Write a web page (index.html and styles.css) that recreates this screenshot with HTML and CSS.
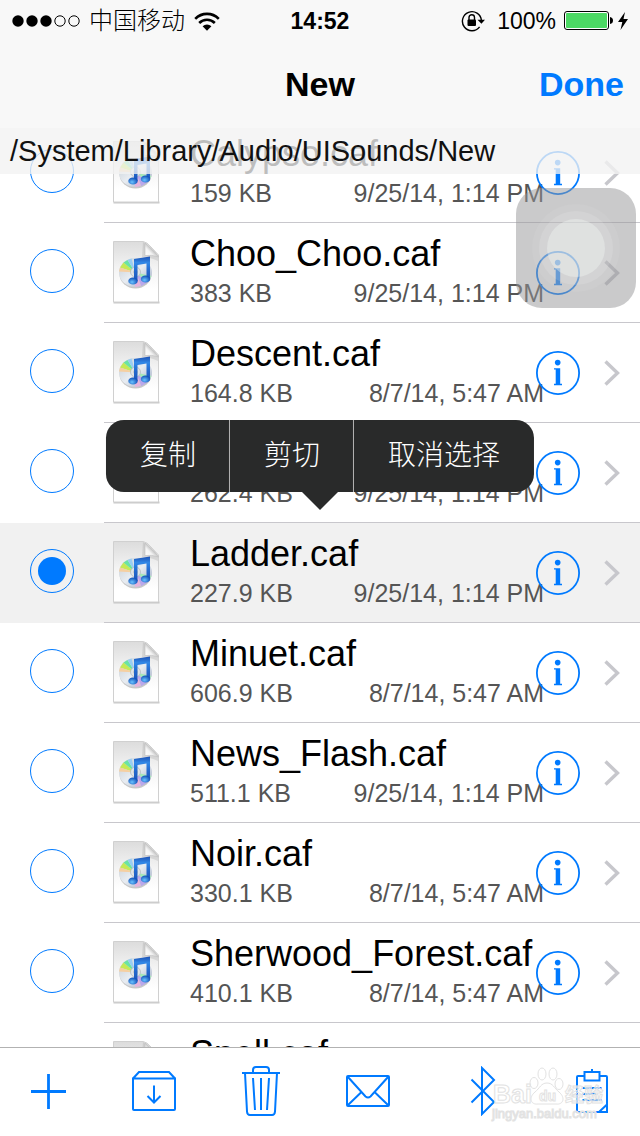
FILE: index.html
```
<!DOCTYPE html>
<html lang="zh-CN">
<head>
<meta charset="utf-8">
<meta name="viewport" content="width=device-width">
<title>New</title>
<link rel="stylesheet" href="styles.css">
</head>
<body>
<svg class="defs" aria-hidden="true">
  <defs>
    <linearGradient id="paper" x1="0" y1="0" x2="0" y2="1">
      <stop offset="0" stop-color="#dcdcdc"/><stop offset=".45" stop-color="#f4f4f4"/><stop offset=".8" stop-color="#fff"/>
    </linearGradient>
    <linearGradient id="fold" x1="0" y1="1" x2="1" y2="0">
      <stop offset="0" stop-color="#fff"/><stop offset=".35" stop-color="#f4f4f4"/><stop offset=".6" stop-color="#b4b4b4"/>
    </linearGradient>
    <linearGradient id="disc" x1="0" y1="0" x2="1" y2="1">
      <stop offset="0" stop-color="#c3ccd3"/><stop offset=".5" stop-color="#e9edf2"/><stop offset="1" stop-color="#9aa8c2"/>
    </linearGradient>
    <linearGradient id="note" x1="0" y1="0" x2="0" y2="1">
      <stop offset="0" stop-color="#1c50b4"/><stop offset=".25" stop-color="#3187e6"/><stop offset=".6" stop-color="#2467cc"/><stop offset="1" stop-color="#1a55bb"/>
    </linearGradient>
    <radialGradient id="head" cx=".4" cy=".65" r=".6">
      <stop offset="0" stop-color="#69c3ff"/><stop offset="1" stop-color="#1352bb"/>
    </radialGradient>
    <symbol id="file" viewBox="0 0 48 64">
      <path d="M.5 61.500h46" stroke="#b5b5b5" stroke-width="2" opacity=".7"/>
      <path d="M.5.5H30Q34 1 38 6L45.500 14v47H.5z" fill="url(#paper)" stroke="#d0d0d0"/>
      <path d="M30 1L29 16q8 0 16 4v-5z" fill="#999" opacity=".25"/>
      <path d="M32 2v12.500q7-1 13.500 1.500C42 10 37 7 32 2z" fill="url(#fold)" stroke="#bdbdbd" stroke-width=".6"/>
      <ellipse cx="22.500" cy="33" rx="16" ry="14.500" fill="#777" opacity=".4"/>
      <ellipse cx="22.500" cy="31.500" rx="16.500" ry="14.500" fill="url(#disc)"/>
      <path d="M22.500 31.500L7 26.500l3.500-5z" fill="#c4e955"/>
      <path d="M22.500 31.500L10.500 21.500l4-2.500z" fill="#6ae3a2"/>
      <path d="M22.500 31.500L7 26.500l-1 4z" fill="#f6cfa0"/>
      <path d="M22.500 31.500L14.500 19l4-1.500z" fill="#98cdf2"/>
      <path d="M22.500 31.500L38.500 35l-4 6z" fill="#a3e8b6"/>
      <path d="M22.500 31.500L34.500 41l-6 4z" fill="#bba7ea"/>
      <path d="M22.500 31.500L28 45l-6 1z" fill="#e7b4dc"/>
      <circle cx="22.500" cy="31" r="5" fill="#dfe3e7" stroke="#adb4bb" stroke-width=".7"/>
      <circle cx="22.500" cy="31" r="2" fill="#fff" stroke="#aaa" stroke-width=".6"/>
      <path d="M21 18L37 15.500V37.500H33.500V22.500L24.500 24V40H21z" fill="url(#note)"/>
      <ellipse cx="20" cy="40" rx="4.700" ry="3.600" fill="url(#head)"/>
      <ellipse cx="32.500" cy="38" rx="4.700" ry="3.600" fill="url(#head)"/>
    </symbol>
    <symbol id="info" viewBox="0 0 44 44">
      <circle cx="22" cy="22" r="21.100" fill="none" stroke="#007aff" stroke-width="1.800"/>
      <circle cx="21.700" cy="11.600" r="2.800" fill="#007aff"/>
      <path d="M18 17.300h6.200v15.500H26v1.400h-8v-1.400h1.700V18.600H18z" fill="#007aff"/>
    </symbol>
    <symbol id="chevron" viewBox="0 0 16 26">
      <path d="M1.500 1.500L13.500 13 1.500 24.500" fill="none" stroke="#c7c7cc" stroke-width="3.400"/>
    </symbol>
  </defs>
</svg>

<div class="app">
  <header class="header">
    <div class="status">
      <div class="status-left">
        <svg class="signal" viewBox="0 0 68 12" role="img" aria-label="信号">
          <circle cx="6" cy="6" r="5.700"/><circle cx="20" cy="6" r="5.700"/><circle cx="34" cy="6" r="5.700"/>
          <g fill="none" stroke="#000"><circle cx="48" cy="6" r="5.200"/><circle cx="62" cy="6" r="5.200"/></g>
        </svg>
        <span class="carrier">中国移动</span>
        <svg class="wifi" viewBox="0 0 26 19" role="img" aria-label="Wi-Fi">
          <g fill="none" stroke="#000" stroke-width="2.600"><path d="M1.200 6.800a16.700 16.700 0 0 1 23.600 0"/><path d="M5.200 11a11 11 0 0 1 15.600 0"/></g>
          <path d="M8.600 14.300a6.200 6.200 0 0 1 8.800 0L13 18.700z"/>
        </svg>
      </div>
      <time class="clock">14:52</time>
      <div class="status-right">
        <svg class="lock" viewBox="0 0 24 22" role="img" aria-label="方向锁定">
          <path d="M18.600 16.800A9.500 9.500 0 1 1 20.400 10.500" fill="none" stroke="#000" stroke-width="1.400"/>
          <path d="M16.500 9.800h7.500l-3.600 4z"/><rect x="6.500" y="9.500" width="8.500" height="6.500" rx="1"/>
          <path d="M8 10V7.500a2.750 2.750 0 0 1 5.500 0V10" fill="none" stroke="#000" stroke-width="1.400"/>
        </svg>
        <span>100%</span>
        <svg class="battery" viewBox="0 0 50 20" aria-hidden="true">
          <rect x=".5" y=".5" width="44" height="18" rx="2.500" fill="#fff" stroke="#000"/><rect x="2" y="2" width="41" height="15" rx="1" fill="#4cd964"/>
          <path d="M46 6q3 .5 3 3.500T46 13z"/>
        </svg>
        <svg class="bolt" viewBox="0 0 10 18" aria-hidden="true"><path d="M7 0L0 10h4.300L2.500 18 10 7H5.500z"/></svg>
      </div>
    </div>
    <nav class="nav">
      <h1>New</h1>
      <button class="done" type="button">Done</button>
    </nav>
  </header>

  <main class="files">
    <p class="path">/System/Library/Audio/UISounds/New</p>
    <ul class="list">
      <li class="row">
        <input class="pick" type="checkbox" aria-label="Calypso.caf">
        <div class="entry"><svg class="file"><use href="#file"/></svg>
          <div class="text"><h2>Calypso.caf</h2><p class="meta"><span>159 KB</span><time>9/25/14, 1:14 PM</time></p></div>
          <button class="info" type="button" aria-label="Info"><svg><use href="#info"/></svg></button><svg class="chevron"><use href="#chevron"/></svg></div>
      </li>
      <li class="row">
        <input class="pick" type="checkbox" aria-label="Choo_Choo.caf">
        <div class="entry"><svg class="file"><use href="#file"/></svg>
          <div class="text"><h2>Choo_Choo.caf</h2><p class="meta"><span>383 KB</span><time>9/25/14, 1:14 PM</time></p></div>
          <button class="info" type="button" aria-label="Info"><svg><use href="#info"/></svg></button><svg class="chevron"><use href="#chevron"/></svg></div>
      </li>
      <li class="row">
        <input class="pick" type="checkbox" aria-label="Descent.caf">
        <div class="entry"><svg class="file"><use href="#file"/></svg>
          <div class="text"><h2>Descent.caf</h2><p class="meta"><span>164.8 KB</span><time>8/7/14, 5:47 AM</time></p></div>
          <button class="info" type="button" aria-label="Info"><svg><use href="#info"/></svg></button><svg class="chevron"><use href="#chevron"/></svg></div>
      </li>
      <li class="row">
        <input class="pick" type="checkbox" aria-label="262.4 KB">
        <div class="entry"><svg class="file"><use href="#file"/></svg>
          <div class="text"><h2></h2><p class="meta"><span>262.4 KB</span><time>9/25/14, 1:14 PM</time></p></div>
          <button class="info" type="button" aria-label="Info"><svg><use href="#info"/></svg></button><svg class="chevron"><use href="#chevron"/></svg></div>
      </li>
      <li class="row selected">
        <input class="pick" type="checkbox" aria-label="Ladder.caf" checked>
        <div class="entry"><svg class="file"><use href="#file"/></svg>
          <div class="text"><h2>Ladder.caf</h2><p class="meta"><span>227.9 KB</span><time>9/25/14, 1:14 PM</time></p></div>
          <button class="info" type="button" aria-label="Info"><svg><use href="#info"/></svg></button><svg class="chevron"><use href="#chevron"/></svg></div>
        <div class="menu"><button type="button">复制</button><button type="button">剪切</button><button type="button">取消选择</button></div>
      </li>
      <li class="row">
        <input class="pick" type="checkbox" aria-label="Minuet.caf">
        <div class="entry"><svg class="file"><use href="#file"/></svg>
          <div class="text"><h2>Minuet.caf</h2><p class="meta"><span>606.9 KB</span><time>8/7/14, 5:47 AM</time></p></div>
          <button class="info" type="button" aria-label="Info"><svg><use href="#info"/></svg></button><svg class="chevron"><use href="#chevron"/></svg></div>
      </li>
      <li class="row">
        <input class="pick" type="checkbox" aria-label="News_Flash.caf">
        <div class="entry"><svg class="file"><use href="#file"/></svg>
          <div class="text"><h2>News_Flash.caf</h2><p class="meta"><span>511.1 KB</span><time>9/25/14, 1:14 PM</time></p></div>
          <button class="info" type="button" aria-label="Info"><svg><use href="#info"/></svg></button><svg class="chevron"><use href="#chevron"/></svg></div>
      </li>
      <li class="row">
        <input class="pick" type="checkbox" aria-label="Noir.caf">
        <div class="entry"><svg class="file"><use href="#file"/></svg>
          <div class="text"><h2>Noir.caf</h2><p class="meta"><span>330.1 KB</span><time>8/7/14, 5:47 AM</time></p></div>
          <button class="info" type="button" aria-label="Info"><svg><use href="#info"/></svg></button><svg class="chevron"><use href="#chevron"/></svg></div>
      </li>
      <li class="row">
        <input class="pick" type="checkbox" aria-label="Sherwood_Forest.caf">
        <div class="entry"><svg class="file"><use href="#file"/></svg>
          <div class="text"><h2>Sherwood_Forest.caf</h2><p class="meta"><span>410.1 KB</span><time>8/7/14, 5:47 AM</time></p></div>
          <button class="info" type="button" aria-label="Info"><svg><use href="#info"/></svg></button><svg class="chevron"><use href="#chevron"/></svg></div>
      </li>
      <li class="row">
        <input class="pick" type="checkbox" aria-label="Spell.caf">
        <div class="entry"><svg class="file"><use href="#file"/></svg>
          <div class="text"><h2>Spell.caf</h2></div></div>
      </li>
    </ul>
    <div class="touch"><svg viewBox="0 0 120 120" aria-hidden="true"><g fill="#fff"><circle cx="60" cy="60" r="44" opacity=".06"/><circle cx="60" cy="60" r="37" opacity=".12"/><circle cx="60" cy="60" r="29" fill="#f1f6f4" opacity=".38"/></g></svg></div>
  </main>

  <footer class="toolbar">
    <button type="button" aria-label="添加"><svg width="35" height="35" viewBox="0 0 35 35"><path d="M17.500 0v35M0 17.500h35" stroke-width="2.800"/></svg></button>
    <button type="button" aria-label="归档"><svg width="44" height="40" viewBox="0 0 44 40"><path d="M1 7.500h42V38q0 1-1 1H2q-1 0-1-1zL7 1h30l6 6.500M22 14.500v16.500M15.500 25L22 31.500 28.500 25"/></svg></button>
    <button type="button" aria-label="删除"><svg width="38" height="50" viewBox="0 0 38 50"><path d="M0 7h38M11 7V4q0-3 3-3h10q3 0 3 3v3M3 7l2 38.500Q5.200 49 8 49h22q2.800 0 3-3.500L35 7M11 12l2 32M19 12v32M27 12l-2 32"/></svg></button>
    <button type="button" aria-label="邮件"><svg width="44" height="32" viewBox="0 0 44 32"><rect x="1" y="1" width="42" height="30" rx="1"/><path d="M1.500 1.500l18 20q2.500 2 5 0l18-20M1.500 30.500l14-13.500M42.500 30.500L28.500 17"/></svg></button>
    <button type="button" aria-label="蓝牙"><svg width="54" height="50" viewBox="0 0 54 50"><path d="M15.500 13.500L38 36 26 48V2L38 14 15.500 36.500"/></svg></button>
    <button type="button" aria-label="剪贴板"><svg width="32" height="44" viewBox="0 0 32 44"><path d="M8.500 7H2Q1 7 1 8v34q0 1 1 1h21l8-7.500V8q0-1-1-1h-6.500M8.500 3h15v8.500h-15zM16 0v3M6.500 19h19M6.500 25h13M6.500 31h19M31 35.500V43h-8"/></svg></button>
    <svg class="mark" viewBox="0 0 120 60" aria-hidden="true">
      <g fill="#fff" fill-opacity=".6" stroke="#e2e2e2" stroke-width="1">
        <ellipse cx="44" cy="18" rx="4" ry="5.500"/><ellipse cx="52" cy="9" rx="4" ry="6"/><ellipse cx="63" cy="9" rx="4" ry="6"/><ellipse cx="69" cy="19" rx="4" ry="5.500"/>
        <path d="M57 18c-6 0-7 5-12 9-7 6-4 13 3 12h18c7 1 10-6 3-12-5-4-6-9-12-9z"/>
        <text x="3" y="38" font-size="25" class="mark-bold">Bai</text><text x="49" y="36" font-size="14" class="mark-bold">du</text>
        <text x="75" y="37" font-size="19" class="mark-bold">经验</text><text x="2" y="53" font-size="13">jingyan.baidu.com</text>
      </g>
    </svg>
  </footer>
</div>
</body>
</html>
```
FILE: styles.css
```
* { box-sizing: border-box; }
body {
  margin: 0;
  background: #fff;
  color: #000;
  font-family: "Liberation Sans", "Noto Sans CJK SC", sans-serif;
}
h1, h2, p, ul { margin: 0; padding: 0; }
button { margin: 0; padding: 0; border: 0; background: none; font: inherit; }
svg { display: block; flex: none; }
.defs { position: absolute; width: 0; height: 0; }
.app { display: flex; flex-direction: column; height: 100vh; overflow: hidden; }

/* Status bar and navigation */
.header { position: relative; z-index: 3; background: #f8f8f8; }
.status {
  display: grid;
  grid-template-columns: 1fr auto 1fr;
  align-items: center;
  height: 40px;
  padding: 2px 12px 0;
  font-size: 23px;
}
.status-left, .status-right { display: flex; align-items: center; }
.status-right { justify-content: flex-end; }
.signal { width: 68px; height: 12px; }
.carrier { margin: 0 9px; font-size: 24px; font-weight: 300; line-height: 32px; }
.wifi { width: 26px; height: 19px; }
.clock { font-weight: 700; }
.lock { width: 24px; height: 22px; margin-right: 12px; }
.battery { width: 50px; height: 20px; margin: 0 4px 0 8px; }
.bolt { width: 10px; height: 18px; }
.nav {
  display: grid;
  grid-template-columns: 1fr auto 1fr;
  align-items: center;
  height: 88px;
  padding: 0 16px;
  font-size: 34px;
  font-weight: 700;
}
.nav h1 { grid-column: 2; font-size: inherit; }
.done { justify-self: end; color: #007aff; }

/* File list */
.files { position: relative; flex: 1; min-height: 0; overflow: hidden; }
.path {
  position: absolute;
  z-index: 1;
  top: 0;
  right: 0;
  left: 0;
  padding: 0 10px;
  background: rgba(242, 242, 242, .78);
  color: #111;
  font-size: 29px;
  line-height: 46px;
}
.list { margin-top: -5px; list-style: none; }
.row { position: relative; display: flex; height: 100px; white-space: nowrap; }
.selected { background: #f1f1f1; }
.pick {
  appearance: none;
  flex: none;
  width: 44px;
  height: 44px;
  margin: 26px 30px;
  padding: 7px;
  border: 1px solid #007aff;
  border-radius: 50%;
}
.pick:checked { background: #007aff content-box; }
.entry {
  display: flex;
  flex: 1;
  min-width: 0;
  padding: 0 20px 0 9px;
  border-bottom: 1px solid #c8c7cc;
}
.file { width: 48px; height: 64px; margin: 18px 29px 0 0; }
.text { flex: 1; min-width: 0; margin-right: -8px; padding-top: 9px; }
.text h2 { height: 44px; font-size: 36px; font-weight: 400; line-height: 44px; }
.meta {
  display: flex;
  justify-content: space-between;
  margin-top: 2px;
  color: #555;
  font-size: 25px;
  line-height: 30px;
}
.info { flex: none; width: 44px; height: 44px; margin: 28px 24px 0 0; }
.info svg { width: 44px; height: 44px; }
.chevron { width: 16px; height: 26px; margin-top: 37px; }

/* Edit menu above the selected row */
.menu {
  position: absolute;
  z-index: 2;
  bottom: calc(100% + 31px);
  left: 50%;
  display: flex;
  border-radius: 18px;
  background: #292a2a;
  color: #fff;
  font-size: 28px;
  font-weight: 300;
  line-height: 72px;
  transform: translateX(-50%);
}
.menu::after {
  position: absolute;
  top: 100%;
  left: 50%;
  margin-left: -18px;
  border: 18px solid transparent;
  border-top-color: #292a2a;
  border-bottom: 0;
  content: "";
}
.menu button { height: 72px; padding: 0 34px; color: #fff; }
.menu button:not(:last-child) { box-shadow: inset -1px 0 #b4b4b4; }

/* Floating touch control */
.touch {
  position: absolute;
  z-index: 3;
  top: 60px;
  right: 4px;
  width: 120px;
  height: 120px;
  border-radius: 26px;
  background: rgba(150, 150, 152, .5);
}

/* Bottom toolbar */
.toolbar {
  position: relative;
  display: flex;
  align-items: center;
  justify-content: space-between;
  height: 89px;
  padding: 0 32px 2px 31px;
  border-top: 1px solid #b2b2b2;
  background: #fff;
}
.toolbar button svg { fill: none; stroke: #007aff; stroke-width: 2; }
.mark { position: absolute; right: 30px; bottom: 11px; width: 120px; height: 60px; }
.mark-bold { font-weight: 700; }
```
